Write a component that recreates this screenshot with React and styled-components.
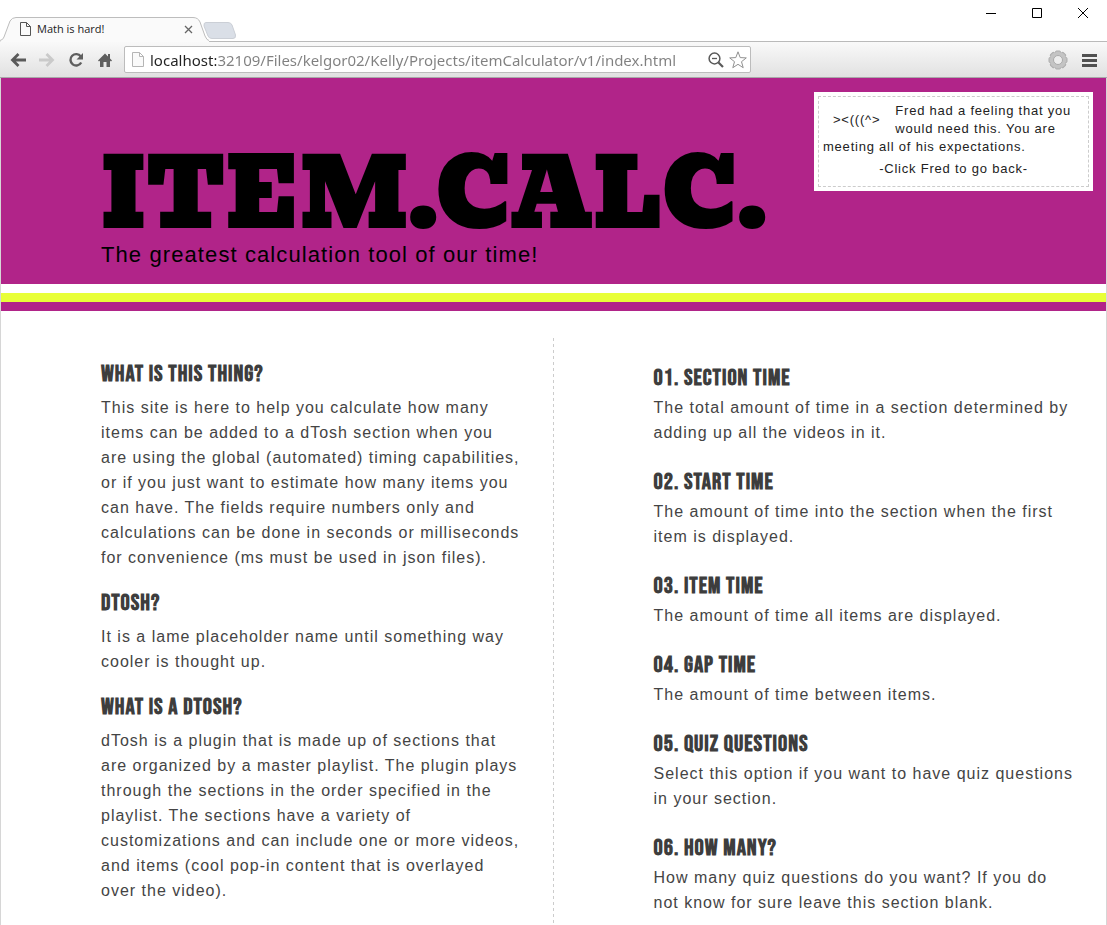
import React from 'react';
import styled, { createGlobalStyle } from 'styled-components';

const purple = '#b12489';

const GlobalStyle = createGlobalStyle`
  * { box-sizing: border-box; }
  body { margin: 0; background: #fff; }
  h1, h2, h3, p { margin: 0; }
  button { border: 0; padding: 0; background: none; font: inherit; }
  svg { display: block; }
`;

const Window = styled.div`
  min-height: 100vh;
  display: flex;
  flex-direction: column;
  font-family: "Liberation Sans", Arial, sans-serif;
`;

const TitleBar = styled.div`
  display: flex;
  justify-content: space-between;
  align-items: flex-end;
  height: 41px;
`;

const Tabs = styled.div`
  display: flex;
  align-items: flex-end;
`;

const Tab = styled.div`
  position: relative;
  display: flex;
  align-items: center;
  width: 209px;
  height: 24px;
  padding: 0 16px 0 20px;
  font: 11px/24px "Open Sans", "Noto Sans", sans-serif;
  color: #222;
`;

const TabShape = styled.svg`
  position: absolute;
  left: 0;
  top: 0;
`;

const TabTitle = styled.span`
  position: relative;
  flex: 1;
  margin-left: 6px;
  white-space: nowrap;
`;

const TabIcon = styled.svg`
  position: relative;
`;

const TabClose = styled.button`
  position: relative;
  width: 9px;
  height: 9px;
`;

const NewTab = styled.button`
  height: 20px;
  margin-left: -6px;
`;

const Controls = styled.div`
  display: flex;
  align-self: flex-start;
  padding: 7px 18px 0 0;
  gap: 34px;
`;

const Control = styled.button`
  width: 12px;
  height: 12px;
`;

const Toolbar = styled.div`
  display: flex;
  align-items: center;
  height: 37px;
  padding: 0 10px;
  background: linear-gradient(#f9f9f9, #e1e1e1);
  border-top: 1px solid #bababa;
  border-bottom: 1px solid #a9a9a9;
`;

const NavButtons = styled.div`
  display: flex;
  gap: 13px;
  margin-right: 11px;
`;

const ToolButton = styled.button`
  width: ${(p) => p.$size || 16}px;
  height: ${(p) => p.$size || 16}px;
`;

const AddressBar = styled.form`
  display: flex;
  align-items: center;
  flex: 0 1 627px;
  height: 27px;
  padding: 0 3px 0 7px;
  background: #fff;
  border: 1px solid #bcbcbc;
  border-radius: 2px;
`;

const Address = styled.input`
  flex: 1;
  min-width: 0;
  height: 24px;
  margin-left: 6px;
  padding: 0;
  border: 0;
  outline: 0;
  font: 15px/24px "Noto Sans", "Open Sans", sans-serif;
  color: transparent;
  background: linear-gradient(90deg, #222 66px, #808080 66px);
  -webkit-background-clip: text;
  background-clip: text;
`;

const AddressActions = styled.div`
  display: flex;
  align-items: center;
  gap: 5px;
`;

const Extensions = styled.div`
  display: flex;
  align-items: center;
  gap: 13px;
  margin-left: auto;
`;

const Page = styled.div`
  flex: 1;
  display: flex;
  flex-direction: column;
  border: solid #d6d6d6;
  border-width: 0 1px;
`;

const Header = styled.header`
  display: flex;
  justify-content: space-between;
  align-items: flex-start;
  padding: 14px 13px 15px 100px;
  background: ${purple};
`;

const Brand = styled.div`
  padding-top: 63px;
`;

const Title = styled.h1`
  font: 400 95px/80px Bevan, "DejaVu Serif Condensed", "DejaVu Serif", serif;
  color: #000;
  white-space: nowrap;
`;

const Tagline = styled.p`
  margin-top: 6px;
  font-size: 22px;
  line-height: 28px;
  letter-spacing: 0.05em;
  color: #000;
`;

const Note = styled.aside`
  flex: none;
  width: 279px;
  padding: 4px;
  background: #fff;
`;

const NoteBody = styled.div`
  padding: 5px 4px 8px;
  border: 1px dashed #ccc;
  font-size: 13px;
  line-height: 18px;
  letter-spacing: 0.06em;
  color: #222;
`;

const Fred = styled.a`
  float: left;
  margin: 9px 15px 0 10px;
  color: inherit;
  text-decoration: none;
`;

const NoteHint = styled.p`
  margin-top: 4px;
  text-align: center;
`;

const Stripe = styled.div`
  height: 9px;
  background: ${(p) => p.$color};
`;

const Main = styled.main`
  flex: 1;
  display: grid;
  grid-template-columns: 1fr 1fr;
  padding-top: 27px;
`;

const Column = styled.section`
  display: flex;
  flex-direction: column;
  gap: ${(p) => (p.$steps ? 25 : 21)}px;
  padding: ${(p) => (p.$steps ? 28 : 24)}px 32px 0 100px;
  ${(p) =>
    !p.$steps &&
    `background: repeating-linear-gradient(#ccc 0 3px, transparent 3px 6px) right top / 1px 100% no-repeat;`}
`;

const Entry = styled.article`
  display: flex;
  flex-direction: column;
  gap: ${(p) => (p.$steps ? 5 : 9)}px;
`;

const Heading = styled.h2`
  font: bold 23px/24px "Bebas Neue", "Liberation Sans Narrow", "Liberation Sans", sans-serif;
  letter-spacing: 1px;
  color: #3d3d3d;
  text-transform: uppercase;
`;

const Text = styled.p`
  font-size: 16px;
  line-height: 25px;
  letter-spacing: 1px;
  color: #444;
`;

const questions = [
  ['What is this thing?', 'This site is here to help you calculate how many items can be added to a dTosh section when you are using the global (automated) timing capabilities, or if you just want to estimate how many items you can have. The fields require numbers only and calculations can be done in seconds or milliseconds for convenience (ms must be used in json files).'],
  ['dTosh?', 'It is a lame placeholder name until something way cooler is thought up.'],
  ['What is a dTosh?', 'dTosh is a plugin that is made up of sections that are organized by a master playlist. The plugin plays through the sections in the order specified in the playlist. The sections have a variety of customizations and can include one or more videos, and items (cool pop-in content that is overlayed over the video).'],
];

const steps = [
  ['01. Section Time', 'The total amount of time in a section determined by adding up all the videos in it.'],
  ['02. Start Time', 'The amount of time into the section when the first item is displayed.'],
  ['03. Item Time', 'The amount of time all items are displayed.'],
  ['04. Gap Time', 'The amount of time between items.'],
  ['05. Quiz Questions', 'Select this option if you want to have quiz questions in your section.'],
  ['06. How Many?', 'How many quiz questions do you want? If you do not know for sure leave this section blank.'],
];

function Entries({ items, isSteps }) {
  return (
    <Column $steps={isSteps}>
      {items.map(([heading, text]) => (
        <Entry key={heading} $steps={isSteps}>
          <Heading>{heading}</Heading>
          <Text>{text}</Text>
        </Entry>
      ))}
    </Column>
  );
}

const gearTeeth = [0, 45, 90, 135, 180, 225, 270, 315];

export default function App() {
  return (
    <Window>
      <GlobalStyle />
      <TitleBar>
        <Tabs>
          <Tab>
            <TabShape width="209" height="25" viewBox="0 0 209 25" aria-hidden="true">
              <path d="M0 24.5 Q3 24 4 20 L10 4 Q12 .5 16 .5 H193 Q198 .5 200 5 L205 19 Q207 23.5 209 23.5 V25 H0Z" fill="#fafafa" />
              <path d="M0 23.5 Q3 23 4 20 L10 4 Q12 .5 16 .5 H193 Q198 .5 200 5 L205 19 Q207 23.5 209 23.5" fill="none" stroke="#bdbdbd" />
            </TabShape>
            <TabIcon width="11" height="14" viewBox="0 0 11 14" fill="none" stroke="#555" aria-hidden="true">
              <path d="M.5 .5H6.5L10.5 4.5V13.5H.5ZM6.5 .5V4.5H10.5" />
            </TabIcon>
            <TabTitle>Math is hard!</TabTitle>
            <TabClose aria-label="Close tab">
              <svg width="9" height="9" viewBox="0 0 9 9" stroke="#666" strokeWidth="1.3">
                <path d="M1 1L8 8M8 1L1 8" />
              </svg>
            </TabClose>
          </Tab>
          <NewTab aria-label="New tab">
            <svg width="34" height="20" viewBox="0 0 34 20">
              <path d="M3 1.5H25Q28 1.5 29 4L32.500 14Q33 17.5 30 17.5H9Q6 17.5 5 15L1 5Q.5 1.5 3 1.5Z" fill="#dadfe7" stroke="#cbcfd6" />
            </svg>
          </NewTab>
        </Tabs>
        <Controls>
          <Control aria-label="Minimize">
            <svg width="12" height="12" viewBox="0 0 12 12"><path d="M1 6.5H11" stroke="#000" /></svg>
          </Control>
          <Control aria-label="Maximize">
            <svg width="12" height="12" viewBox="0 0 12 12"><path d="M1.5 1.5H10.5V10.5H1.5Z" fill="none" stroke="#000" /></svg>
          </Control>
          <Control aria-label="Close">
            <svg width="12" height="12" viewBox="0 0 12 12"><path d="M1 1L11 11M11 1L1 11" stroke="#000" /></svg>
          </Control>
        </Controls>
      </TitleBar>

      <Toolbar>
        <NavButtons>
          <ToolButton aria-label="Back">
            <svg width="16" height="16" viewBox="0 0 16 16" fill="none" stroke="#5a5a5a" strokeWidth="2.8"><path d="M8.5 2L2.5 8L8.5 14M3 8H16" /></svg>
          </ToolButton>
          <ToolButton aria-label="Forward">
            <svg width="16" height="16" viewBox="0 0 16 16" fill="none" stroke="#cacaca" strokeWidth="2.8"><path d="M7.5 2L13.5 8L7.5 14M13 8H0" /></svg>
          </ToolButton>
          <ToolButton aria-label="Reload">
            <svg width="16" height="16" viewBox="0 0 16 16"><path d="M12.8 4.5A5.700 5.700 0 1 0 13.2 10.5" fill="none" stroke="#5f5f5f" strokeWidth="2.4" /><path d="M15 1V7.5H8.5Z" fill="#5f5f5f" /></svg>
          </ToolButton>
          <ToolButton aria-label="Home">
            <svg width="16" height="16" viewBox="0 0 16 16"><path d="M8 1.500L11 4.500V2H13V6.500L15 8.500L14 9.500L13 8.700V15H9.5V10H6.5V15H3V8.700L2 9.500L1 8.500Z" fill="#5f5f5f" /></svg>
          </ToolButton>
        </NavButtons>
        <AddressBar onSubmit={(e) => e.preventDefault()}>
          <svg width="12" height="15" viewBox="0 0 12 15" fill="#fafafa" stroke="#b5b5b5" aria-hidden="true">
            <path d="M.5 .5H7.5L11.5 4.5V14.5H.5ZM7.5 .5V4.5H11.5" />
          </svg>
          <Address aria-label="Address" defaultValue="localhost:32109/Files/kelgor02/Kelly/Projects/itemCalculator/v1/index.html" />
          <AddressActions>
            <ToolButton type="button" aria-label="Zoom">
              <svg width="16" height="16" viewBox="0 0 16 16" fill="none" stroke="#5a5a5a">
                <circle cx="6.5" cy="6.5" r="5.4" strokeWidth="1.5" />
                <path d="M4 6.5H9" strokeWidth="1.3" />
                <path d="M10.5 10.5L15 15" strokeWidth="2.2" />
              </svg>
            </ToolButton>
            <ToolButton type="button" aria-label="Bookmark" $size={18}>
              <svg width="18" height="18" viewBox="0 0 18 18" fill="#fff" stroke="#909090" strokeLinejoin="round">
                <path d="M9 .8L11.2 6.6L17.3 6.9L12.5 10.7L14.2 16.7L9 13.3L3.8 16.7L5.5 10.7L.7 6.9L6.8 6.6Z" />
              </svg>
            </ToolButton>
          </AddressActions>
        </AddressBar>
        <Extensions>
          <ToolButton aria-label="Extension" $size={20}>
            <svg width="20" height="20" viewBox="0 0 20 20">
              <g fill="#c2c2c2" stroke="#adadad">
                {gearTeeth.map((a) => (
                  <rect key={a} x="7.5" y="1" width="5" height="4" rx="1" transform={`rotate(${a} 10 10)`} />
                ))}
              </g>
              <circle cx="10" cy="10" r="6" fill="none" stroke="#c4c4c4" strokeWidth="4" />
              <circle cx="10" cy="10" r="4.5" fill="#ededed" stroke="#aaa" />
            </svg>
          </ToolButton>
          <ToolButton aria-label="Menu">
            <svg width="16" height="16" viewBox="0 0 16 16" stroke="#505050" strokeWidth="3"><path d="M1 3.5H16M1 8.5H16M1 13.5H16" /></svg>
          </ToolButton>
        </Extensions>
      </Toolbar>

      <Page>
        <Header>
          <Brand>
            <Title>ITEM.CALC.</Title>
            <Tagline>The greatest calculation tool of our time!</Tagline>
          </Brand>
          <Note>
            <NoteBody>
              <Fred href="#back">&gt;&lt;(((^&gt;</Fred>
              <p>Fred had a feeling that you would need this. You are meeting all of his expectations.</p>
              <NoteHint>-Click Fred to go back-</NoteHint>
            </NoteBody>
          </Note>
        </Header>
        <Stripe $color="#fff" />
        <Stripe $color="#e8ff38" />
        <Stripe $color={purple} />
        <Main>
          <Entries items={questions} />
          <Entries items={steps} isSteps />
        </Main>
      </Page>
    </Window>
  );
}
